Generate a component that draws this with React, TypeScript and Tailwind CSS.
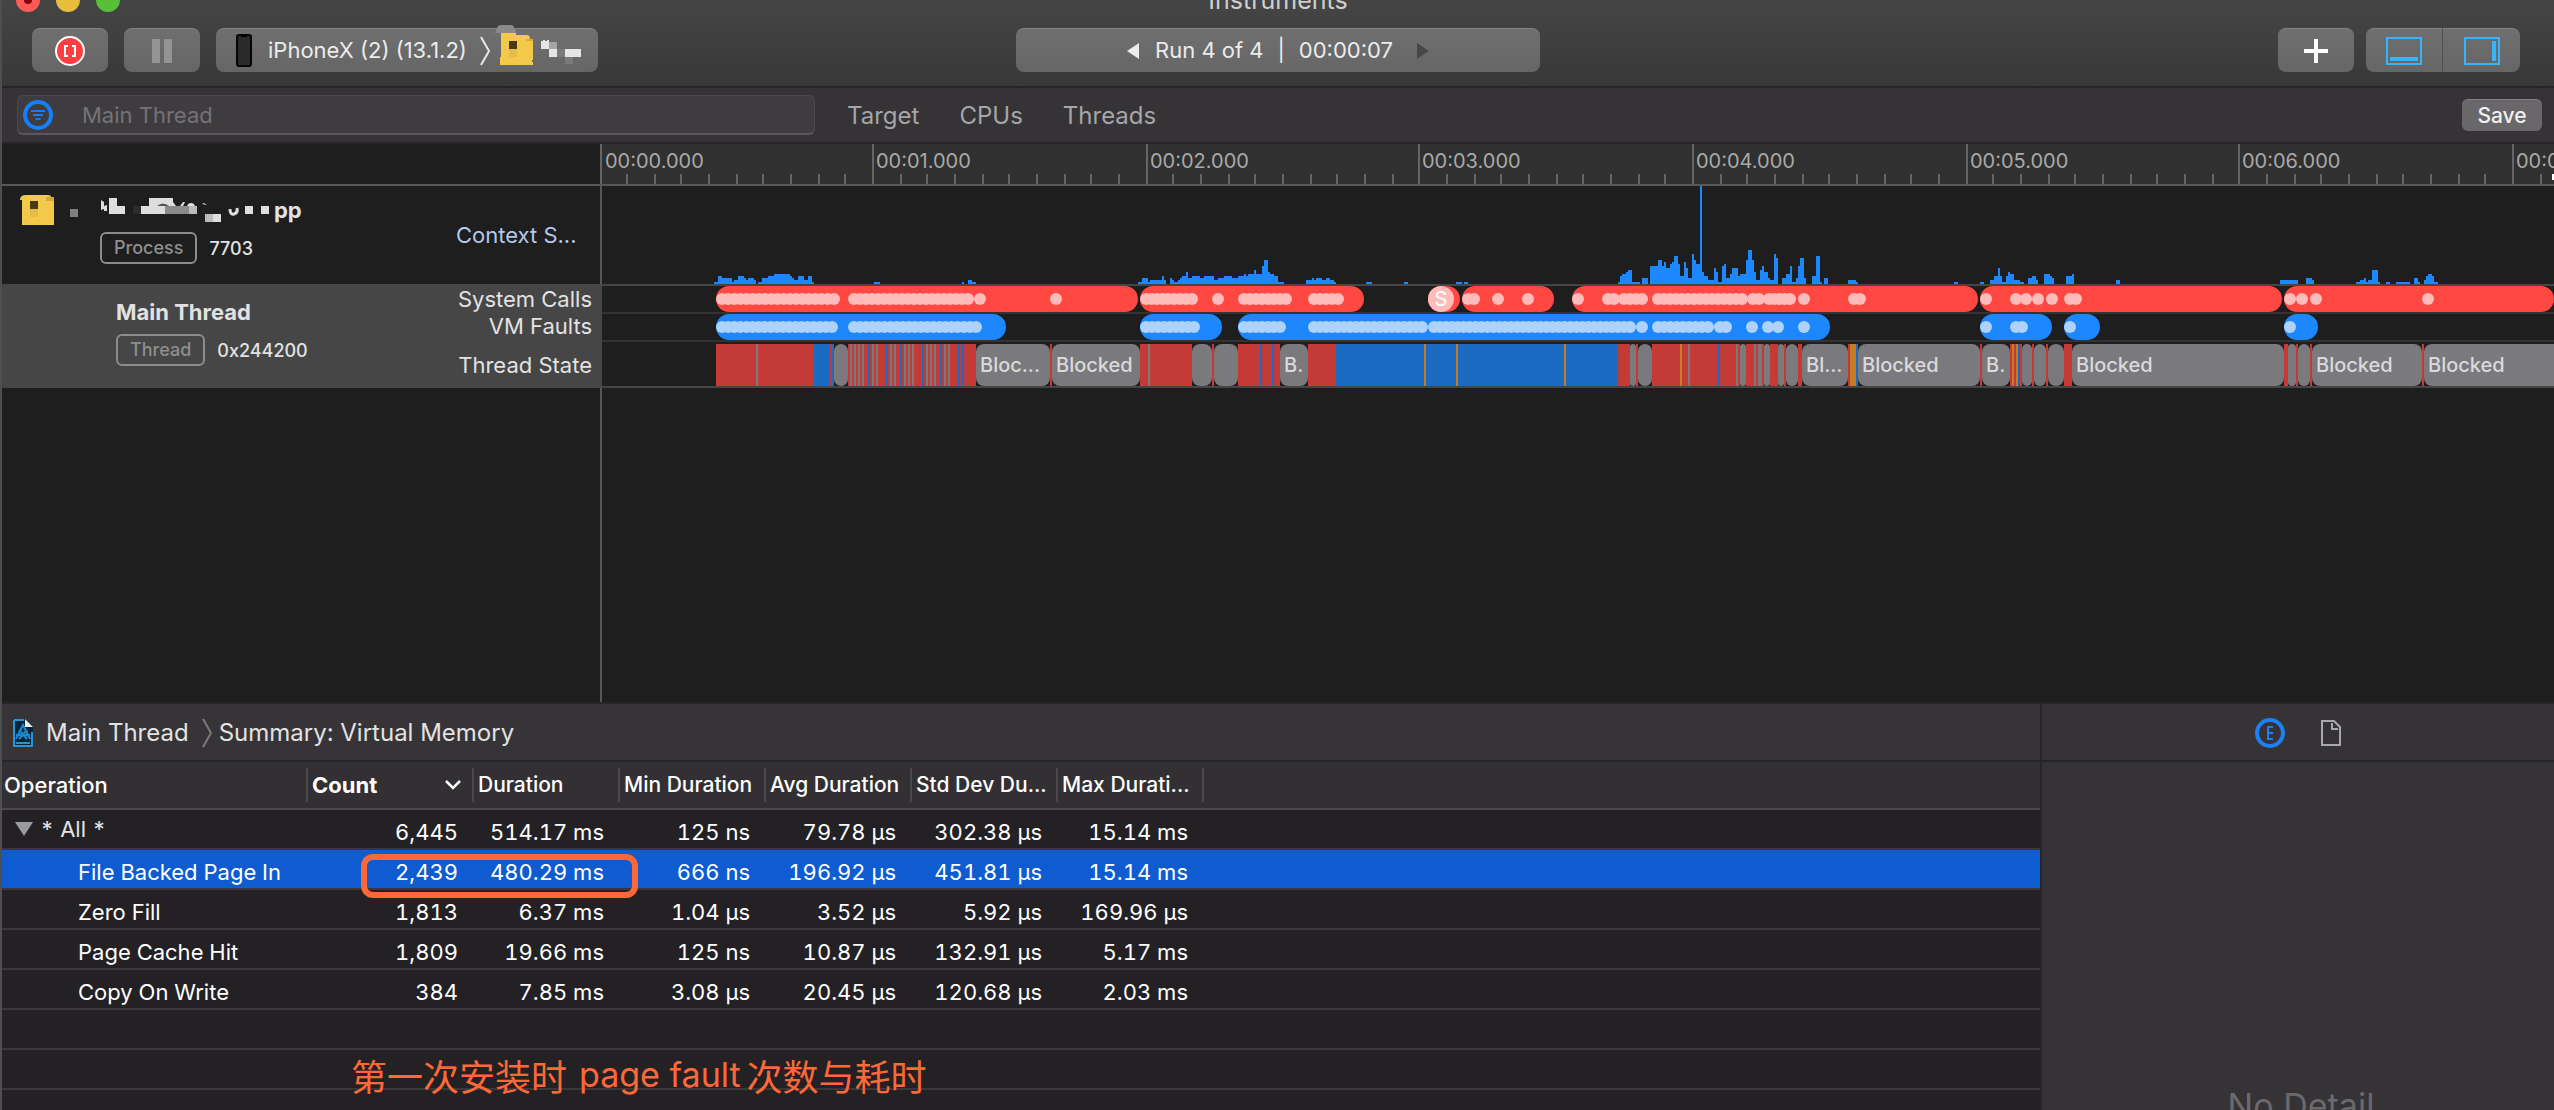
import React from "react";

const ORIGIN = 602;
const SPAN = 1952;

/* Context switches histogram: x, width, height */
const HISTOGRAM = `714,4,2 718,4,8 722,10,6 732,2,2 734,4,4 738,6,8 744,2,6 746,2,4 748,6,6 754,2,4 758,4,2 762,6,6 768,6,8 774,16,10
790,2,8 792,2,6 794,4,4 798,6,8 804,4,4 808,4,8 812,2,2 874,6,2 962,2,2 968,4,4 972,4,2 1138,4,2 1142,6,6 1148,2,2 1150,12,4 1162,2,8 1164,2,4
1170,2,6 1172,2,4 1174,4,2 1178,2,4 1180,2,6 1182,4,8 1186,2,12 1188,4,6 1192,8,8 1200,4,6 1204,10,8 1214,4,4 1218,6,6 1224,8,8 1232,6,6
1238,6,8 1244,2,10 1246,2,8 1248,6,10 1254,2,14 1256,6,10 1262,2,18 1264,4,24 1268,2,12 1270,4,10 1274,4,8 1278,6,2 1306,6,4 1312,2,6
1314,2,4 1316,6,6 1322,4,4 1326,4,6 1330,4,4 1334,2,2 1366,6,2 1404,4,2 1456,6,2 1464,4,2
1618,2,2 1620,2,8 1622,4,10 1626,2,12 1628,4,14 1632,8,2 1642,6,6 1650,8,18 1658,4,24 1662,2,18 1664,2,22 1666,4,16 1670,2,20 1672,2,22
1674,4,28 1678,2,20 1680,4,8 1684,2,22 1686,2,16 1688,4,6 1692,2,30 1694,2,24 1696,4,20 1700,2,98 1702,2,12 1704,4,8 1708,6,4 1714,2,16
1716,2,12 1718,4,2 1722,2,18 1724,2,20 1726,4,6 1730,2,10 1732,6,16 1738,2,8 1740,6,10 1746,2,24 1748,4,34 1752,2,24 1754,2,12 1756,4,4
1760,2,14 1762,2,18 1764,4,12 1768,2,6 1770,4,4 1774,2,30 1776,2,26 1782,4,6 1786,4,10 1790,2,18 1792,4,2 1796,2,6 1798,2,18 1800,4,26
1804,2,6 1812,4,8 1816,4,28 1820,2,2 1824,4,6 1848,8,4 1856,2,2 1954,4,2 1980,4,2 1990,4,4 1994,4,8 1998,2,16 2000,2,8 2002,4,2 2006,2,8
2008,2,12 2010,4,10 2014,6,4 2020,4,2 2028,4,6 2032,4,8 2036,2,4 2044,6,10 2050,2,8 2052,2,6 2066,6,8 2072,2,10 2116,4,4 2280,18,4
2306,6,6 2312,2,4 2356,4,2 2360,4,4 2364,2,6 2366,2,2 2368,4,4 2372,6,14 2378,2,2 2386,4,2 2396,14,2 2414,4,6 2418,2,2 2424,2,4 2426,2,8
2428,4,10 2432,2,8 2434,4,2`
  .split(/\s+/)
  .map((s) => s.split(",").map(Number));

const SYSCALL_PILLS = [[716, 1138], [1140, 1364], [1428, 1460], [1462, 1554], [1572, 1978], [1980, 2282], [2284, 2554]];
const SYSCALL_RUNS = [
  [716, 796], [790, 840], [848, 974], [974, 986], [1050, 1062], [1140, 1174], [1168, 1198], [1212, 1224], [1238, 1292], [1308, 1344],
  [1462, 1480], [1492, 1504], [1522, 1534], [1572, 1584], [1602, 1620], [1618, 1648], [1652, 1748], [1747, 1765], [1763, 1796], [1798, 1810],
  [1848, 1866], [1980, 1992], [2010, 2022], [2020, 2032], [2032, 2044], [2046, 2058], [2064, 2082], [2284, 2296], [2296, 2308],
  [2310, 2322], [2422, 2434],
];
const FAULT_PILLS = [[716, 1006], [1140, 1222], [1238, 1830], [1980, 2052], [2064, 2100], [2284, 2318]];
const FAULT_RUNS = [
  [716, 838], [848, 982], [1140, 1200], [1238, 1286], [1308, 1428], [1428, 1624], [1618, 1636], [1636, 1648], [1652, 1714], [1714, 1732],
  [1746, 1758], [1762, 1774], [1772, 1784], [1798, 1810], [1980, 1992], [2010, 2022], [2016, 2028], [2064, 2076], [2284, 2296],
];

/* Thread states: kind + end position (+ label). n none, r running, b runnable, g tick, o interrupted, k blocked */
const STATES = `n716 r756 g758 r814 b830 r832 b834 k848 r850 g852 r854 g856 r858 g860 r862 g864 r868 b870 r872 g874 r876 g878 r886 b888 r890 g892
r894 g896 r900 b902 r904 g906 r908 g910 r912 g914 r922 b924 r926 g928 r930 g932 r934 g936 r940 b942 r944 g946 r948 g950 r958 b960 r962 b964
r976 k1050:Bloc... r1052 k1140:Blocked r1148 g1150 r1192 k1212 r1214 k1238 r1260 b1262 r1272 b1274 r1280 k1308:B. r1336 b1424 o1426 b1456
o1458 b1564 o1566 b1618 r1630 k1636 r1638 k1652 r1680 o1682 r1688 g1690 r1718 b1720 r1736 g1738 r1740 k1746 r1754 g1756 r1758 g1762 r1764
k1770 r1778 k1784 r1786 k1798 r1802 k1848:Bl... r1850 o1856 b1858 k1980:Blocked r1982 k2010:B. r2012 o2014 r2016 o2018 b2020 r2022 k2032
r2034 k2046 r2048 k2064 r2072 k2284:Blocked r2288 k2296 r2298 k2310 r2312 k2422:Blocked r2424 k2572:Blocked`
  .split(/\s+/)
  .map((s) => {
    const [head, label] = s.split(":");
    return { kind: head[0], end: Number(head.slice(1)), label };
  });

const STATE_CLASS: Record<string, string> = {
  n: "",
  r: "bg-[#c43a37]",
  b: "bg-[#1c6bc2]",
  g: "bg-[#7a797d]",
  o: "bg-[#c67c22]",
  k: "bg-[#7a797d] rounded-lg",
};

const COLUMNS = ["Duration", "Min Duration", "Avg Duration", "Std Dev Du...", "Max Durati..."];
const ROWS = [
  ["File Backed Page In", "2,439", "480.29 ms", "666 ns", "196.92 µs", "451.81 µs", "15.14 ms"],
  ["Zero Fill", "1,813", "6.37 ms", "1.04 µs", "3.52 µs", "5.92 µs", "169.96 µs"],
  ["Page Cache Hit", "1,809", "19.66 ms", "125 ns", "10.87 µs", "132.91 µs", "5.17 ms"],
  ["Copy On Write", "384", "7.85 ms", "3.08 µs", "20.45 µs", "120.68 µs", "2.03 ms"],
];
const TOTAL = ["6,445", "514.17 ms", "125 ns", "79.78 µs", "302.38 µs", "15.14 ms"];

const BUTTON =
  "flex h-11 items-center justify-center rounded-lg border-t border-[#858585] bg-linear-to-b from-[#6f6f6f] to-[#666666]";

function Lane({ pills, runs, fill, dot, marker }: { pills: number[][]; runs: number[][]; fill: string; dot: string; marker?: number }) {
  const dots: number[] = [];
  runs.forEach(([a, b]) => {
    const room = b - a - 12;
    const n = Math.max(0, Math.round(room / 6));
    for (let i = 0; i <= n; i++) dots.push(a + 6 + (n ? (room * i) / n : 0));
  });
  return (
    <svg className="block h-[26px] shrink-0" width={SPAN} height={26} viewBox={`${ORIGIN} 0 ${SPAN} 26`} aria-hidden="true">
      {pills.map(([a, b]) => (
        <rect key={a} x={a} y={0} width={b - a} height={26} rx={13} fill={fill} />
      ))}
      {dots.map((x, i) => (
        <circle key={i} cx={x} cy={13} r={6} fill={dot} />
      ))}
      {marker !== undefined && (
        <g>
          <circle cx={marker} cy={13} r={13} fill={dot} />
          <text x={marker} y={20} textAnchor="middle" fontSize={20} fill="#fff" fontFamily="Inter, sans-serif">
            S
          </text>
        </g>
      )}
    </svg>
  );
}

function Ruler() {
  const ticks = Array.from({ length: 72 }, (_, i) => ({ i, x: 2 * Math.round((598.5 + 27.34 * i) / 2) })).filter((t) => t.i > 0);
  return (
    <svg className="block h-10" width={SPAN} height={40} viewBox={`${ORIGIN} 0 ${SPAN} 40`} fontFamily="Inter, sans-serif">
      {ticks.map(({ i, x }) => (
        <rect key={i} x={x} y={i % 10 ? 30 : 0} width={2} height={i % 10 ? 10 : 40} fill="#666666" />
      ))}
      {[601, 872, 1146, 1418, 1692, 1966, 2238, 2512].map((x, s) => (
        <text key={s} x={x + 4} y={24} fontSize={20} fill="#a9a9a9">
          {`00:0${s}.000`}
        </text>
      ))}
      <rect x={2552} y={30} width={2} height={6} fill="#fff" />
    </svg>
  );
}

function AppTile() {
  return (
    <svg width="58" height="32" viewBox="20 193 58 32" aria-hidden="true">
      <path d="M20 199q0-5 6-5h22q3 0 3 2h3v28H22v-25z" fill="#f3c84b" />
      <path d="M46 196h8v4h-8z" fill="#cfa93e" />
      <path d="M30 200h8v8h-8z" fill="#4a3a12" />
      <path d="M30 208h8v8h-8z" fill="#e5bc47" />
      <path d="M70 208h8v8h-8z" fill="#808080" />
    </svg>
  );
}

function MaskedName() {
  return (
    <svg width="174" height="30" viewBox="101 197 174 30" aria-hidden="true">
      <path d="M102 202l3 2v4l3-1v6h-3v-2l-3 1zM110 200h8v8h8v8h-16zM142 208h8v-8h24v8h-8v8h-24zM246 208h8v8h-8zM262 208h8v8h-8z" fill="#dedede" />
      <path d="M134 208h8v8h-8z" fill="#2c2c2c" />
      <path d="M166 208h24v8h-24z" fill="#8a8a8a" />
      <path d="M190 208h8v8h-8zM206 216h8v8h-8z" fill="#bcbcbc" />
      <path d="M214 216h8v8h-8zM174 204l3 4h4l3-4h2l-2 4h-12zM188 208q1-3 4-3t4 3zM203 206l5 1-3-2z" fill="#dedede" />
      <path d="M231 211q0 6 4 5t3-6" fill="none" stroke="#dedede" strokeWidth="3" />
      <path d="M158 208q6-5 12 0z" fill="#555" />
    </svg>
  );
}

function Tag({ children }: { children: React.ReactNode }) {
  return (
    <span className="flex h-8 items-center rounded-md border-2 border-[#8c8c8c] px-3 text-[18px] leading-6 font-medium text-[#8f8f8f]">{children}</span>
  );
}

function HeaderCell({ children, className = "" }: { children?: React.ReactNode; className?: string }) {
  return (
    <th scope="col" className="h-12 border-b-2 border-[#4a484b] bg-[#323033] p-0 text-left font-medium">
      <div className={`flex h-[34px] items-center overflow-hidden border-r-2 border-[#4a484b] pl-1 whitespace-nowrap ${className}`}>{children}</div>
    </th>
  );
}

function Summary() {
  const cell = "h-10 border-b-2 border-[#39373a] p-0 pt-1.5 pr-4 text-right whitespace-nowrap";
  return (
    <table className="w-full table-fixed border-separate border-spacing-0 text-[22px] leading-6 text-white">
      <colgroup>
        <col className="w-[306px]" />
        <col className="w-[166px]" />
        {COLUMNS.map((c) => (
          <col key={c} className="w-[146px]" />
        ))}
        <col />
      </colgroup>
      <thead>
        <tr>
          <HeaderCell className="pl-[2px]">Operation</HeaderCell>
          <HeaderCell className="justify-between pr-2.5 font-bold">
            Count
            <svg width="18" height="12" viewBox="0 0 18 12" fill="none" stroke="#fff" strokeWidth="2.5" aria-hidden="true">
              <path d="M2 2l7 7 7-7" />
            </svg>
          </HeaderCell>
          {COLUMNS.map((c) => (
            <HeaderCell key={c} className="text-[21px]">{c}</HeaderCell>
          ))}
          <th className="border-b-2 border-[#4a484b] bg-[#323033]" aria-label="Spacer" />
        </tr>
      </thead>
      <tbody className="tabular-nums">
        <tr>
          <td className="h-10 border-b-2 border-[#39373a] p-0 text-[#e4e4e4]">
            <div className="flex items-center gap-1.5 pl-3">
              <svg width="20" height="16" viewBox="0 0 20 16" aria-hidden="true">
                <path d="M1 1h18l-9 14z" fill="#9b9a9c" />
              </svg>
              * All *
            </div>
          </td>
          {TOTAL.map((v, i) => (
            <td key={i} className={cell}>{v}</td>
          ))}
          <td className="border-b-2 border-[#39373a]" />
        </tr>
        {ROWS.map((row, r) => (
          <tr key={row[0]} className={r === 0 ? "bg-[#0f5bd0]" : ""}>
            <td className="h-10 border-b-2 border-[#39373a] p-0 pt-1.5 pl-[76px] whitespace-nowrap">{row[0]}</td>
            {row.slice(1).map((v, i) => (
              <td key={i} className={cell}>{v}</td>
            ))}
            <td className="border-b-2 border-[#39373a]" />
          </tr>
        ))}
        {[0, 1, 2].map((r) => (
          <tr key={r}>
            <td colSpan={8} className="h-10 border-b-2 border-[#39373a] p-0" />
          </tr>
        ))}
      </tbody>
    </table>
  );
}

export default function App() {
  return (
    <div className="flex h-screen flex-col overflow-hidden border-l-2 border-[#4f4f4f] bg-[#1e1e1e] font-['Inter',sans-serif] text-[#e2e2e2]">
      <header className="h-22 shrink-0 border-b-2 border-[#262528] bg-linear-to-b from-[#454545] to-[#383838]">
        <div className="-mt-3 grid h-6 grid-cols-[1fr_auto_1fr] items-center">
          <div className="flex gap-4 pl-3.5">
            <button aria-label="Close" className="flex size-6 items-center justify-center rounded-full bg-[#fc5b57]">
              <span className="size-2 rounded-full bg-[#8b0000]" />
            </button>
            <button aria-label="Minimize" className="size-6 rounded-full bg-[#e5bf3c]" />
            <button aria-label="Zoom" className="size-6 rounded-full bg-[#57c038]" />
          </div>
          <h1 className="text-[25px] leading-6 text-[#cfcfcf]">Instruments</h1>
        </div>
        <div className="grid grid-cols-[1fr_auto_1fr] items-center pt-4">
          <div className="flex gap-4 pl-[30px]">
            <button aria-label="Record" className={`w-19 ${BUTTON}`}>
              <svg width="32" height="32" viewBox="0 0 32 32" fill="none">
                <circle cx="16" cy="16" r="14" fill="#fc3f41" stroke="#fff" strokeWidth="2" />
                <path d="M14 11h-3v10h3M18 11h3v10h-3" stroke="#fff" strokeWidth="2" />
              </svg>
            </button>
            <button aria-label="Pause" className={`w-19 ${BUTTON}`}>
              <svg width="20" height="24" viewBox="0 0 20 24" fill="#949494">
                <path d="M0 0h8v24H0zM12 0h8v24h-8z" />
              </svg>
            </button>
            <button className={`w-[382px] pl-4 text-[22px] whitespace-nowrap text-[#ececec] ${BUTTON} !justify-start`}>
              <svg className="shrink-0" width="24" height="34" viewBox="0 0 24 34" aria-hidden="true">
                <rect x="5" y="1" width="14" height="31" rx="2" fill="#2a2a2a" stroke="#050505" strokeWidth="2" />
                <path d="M9 1h6v2H9z" fill="#000" />
              </svg>
              <span className="pl-3">iPhoneX (2) (13.1.2)</span>
              <svg className="ml-3 shrink-0" width="12" height="30" viewBox="0 0 12 30" fill="none" stroke="#e8e8e8" strokeWidth="2" aria-hidden="true">
                <path d="M2 1l8 14-8 14" />
              </svg>
              <svg className="-mt-1 ml-1 shrink-0 self-start" width="88" height="42" viewBox="496 24 88 42" aria-hidden="true">
                <path d="M496 32l3-7q1-1 3-1h10q2 0 3 2l2 6z" fill="#8a8a8a" />
                <path d="M502 32h15v2h11q3 0 3 4h3v21h-1v2h1v3h-33v-8h1z" fill="#f3c84b" />
                <path d="M527 38h7v2h-7z" fill="#d6ae40" />
                <path d="M510 40h8v8h-8z" fill="#4a3a12" />
                <path d="M510 48h8v8h-8z" fill="#e5bc47" />
                <path d="M542 40h2v-1h2v1h2v-1h2v9h-8zM550 48h8v8h-8zM566 48h16v8h-16z" fill="#e6e6e6" />
                <path d="M550 41h8v7h-8z" fill="#a5a5a5" />
                <path d="M558 48h8v8h-8zM566 56h8v7h-8z" fill="#7a7a7a" />
              </svg>
            </button>
          </div>
          <div className={`w-[524px] gap-4 text-[22px] text-[#ececec] ${BUTTON}`}>
            <button aria-label="Previous run">
              <svg width="12" height="16" viewBox="0 0 12 16" fill="#ececec"><path d="M12 0v16L0 8z" /></svg>
            </button>
            <span className="flex gap-3.5">
              <span>Run 4 of 4</span>
              <span>|</span>
              <span>00:00:07</span>
            </span>
            <button aria-label="Next run" className="ml-2">
              <svg width="12" height="16" viewBox="0 0 12 16" fill="#474747"><path d="M0 0v16l12-8z" /></svg>
            </button>
          </div>
          <div className="flex justify-end gap-3 pr-[34px]">
            <button aria-label="Add" className={`w-19 ${BUTTON}`}>
              <svg width="24" height="24" viewBox="0 0 24 24" stroke="#fff" strokeWidth="4"><path d="M12 0v24M0 12h24" /></svg>
            </button>
            <div className="flex">
              <button aria-label="Toggle detail area" className={`w-[77px] border-r border-r-[#505050] ${BUTTON} !rounded-r-none`}>
                <svg width="36" height="28" viewBox="0 0 36 28" fill="none" stroke="#38b5fa" strokeWidth="2">
                  <path d="M1 1h34v26H1z" />
                  <path d="M4 22h28" strokeWidth="4" />
                </svg>
              </button>
              <button aria-label="Toggle inspector" className={`w-[77px] ${BUTTON} !rounded-l-none`}>
                <svg width="36" height="28" viewBox="0 0 36 28" fill="none" stroke="#38b5fa" strokeWidth="2">
                  <path d="M1 1h34v26H1z" />
                  <path d="M30 4v20" strokeWidth="4" />
                </svg>
              </button>
            </div>
          </div>
        </div>
      </header>

      <div className="flex h-14 shrink-0 items-center border-b-2 border-[#272528] bg-[#353336] text-[24px] text-[#a6a5a7]">
        <label className="ml-[15px] flex h-10 w-[798px] items-center rounded-md border border-b-2 border-[#4b494c] border-b-[#5a585b] bg-[#3f3c40] pl-1">
          <svg width="32" height="32" viewBox="0 0 32 32" fill="none" stroke="#167efb" strokeWidth="4" aria-hidden="true">
            <circle cx="16" cy="16" r="13" />
            <path d="M9 12h14M11 16h10M13.500 20h5" strokeWidth="2" />
          </svg>
          <input
            aria-label="Filter"
            placeholder="Main Thread"
            className="ml-7 min-w-0 flex-1 bg-transparent pt-0.5 text-[22px] text-white outline-none placeholder:text-[#757376]"
          />
        </label>
        <nav className="ml-8 flex gap-10 pt-0.5">
          <button>Target</button>
          <button>CPUs</button>
          <button>Threads</button>
        </nav>
        <button className="mr-3 ml-auto h-8 w-20 rounded-md border-t border-[#838184] bg-[#69676a] text-[21px] font-medium text-[#f0f0f0]">Save</button>
      </div>

      <section className="flex min-h-0 flex-1 flex-col">
        <div className="flex h-[42px] shrink-0 border-b-2 border-[#585858]">
          <div className="w-150 shrink-0 border-r-2 border-[#666666]" />
          <div className="min-w-0 flex-1 overflow-hidden bg-[#303030]">
            <Ruler />
          </div>
        </div>

        <div className="flex h-25 shrink-0 border-b-2 border-[#464646]">
          <div className="flex w-150 shrink-0 border-r-2 border-[#555555]">
            <div className="flex w-[454px] gap-[22px] pt-2 pl-4.5">
              <AppTile />
              <div>
                <div className="flex h-8 items-center">
                  <MaskedName />
                  <span className="text-[22px] font-bold">pp</span>
                </div>
                <div className="mt-1.5 flex items-center gap-3 text-[18px]">
                  <Tag>Process</Tag>
                  <span className="font-medium">7703</span>
                </div>
              </div>
            </div>
            <span className="self-center text-[22px] text-[#b5c8ea]">Context S...</span>
          </div>
          <div className="min-w-0 flex-1 overflow-hidden">
            <svg className="block" width={SPAN} height={98} viewBox={`${ORIGIN} 0 ${SPAN} 98`} fill="#1d87ff" shapeRendering="crispEdges" role="img" aria-label="Context switches">
              {HISTOGRAM.map(([x, w, h]) => (
                <rect key={x} x={x} y={98 - h} width={w} height={h} />
              ))}
            </svg>
          </div>
        </div>

        <div className="flex h-[102px] shrink-0 border-b-2 border-[#464646]">
          <div className="flex w-150 shrink-0 justify-between bg-[#464646] pr-2.5">
            <div className="pt-2.5 pl-[114px]">
              <h2 className="text-[22px] leading-8 font-bold">Main Thread</h2>
              <div className="mt-1.5 flex items-center gap-3 text-[18px]">
                <Tag>Thread</Tag>
                <span className="font-medium">0x244200</span>
              </div>
            </div>
            <div className="text-right text-[22px] leading-[27px]">
              <div>System Calls</div>
              <div>VM Faults</div>
              <div className="pt-3">Thread State</div>
            </div>
          </div>
          <div className="min-w-0 flex-1 overflow-hidden">
            <div className="border-b-2 border-[#333333]">
              <Lane pills={SYSCALL_PILLS} runs={SYSCALL_RUNS} fill="#fe4841" dot="#ffbcba" marker={1441} />
            </div>
            <div className="border-b-2 border-[#333333]">
              <Lane pills={FAULT_PILLS} runs={FAULT_RUNS} fill="#1d87ff" dot="#afd2fd" />
            </div>
            <div className="mt-0.5 flex h-[42px]">
              {STATES.map((s, i) => (
                <div
                  key={i}
                  className={`flex shrink-0 items-center overflow-hidden text-[20px] font-medium whitespace-nowrap text-[#dadada] ${STATE_CLASS[s.kind]}`}
                  style={{ width: s.end - (i ? STATES[i - 1].end : ORIGIN) }}
                >
                  {s.label && <span className="pl-1">{s.label}</span>}
                </div>
              ))}
            </div>
          </div>
        </div>

        <div className="w-150 flex-1 border-r-2 border-[#555555]" />
      </section>

      <section className="flex h-[408px] shrink-0 border-t-2 border-[#262528]">
        <div className="relative min-w-0 flex-1 overflow-hidden border-r-2 border-[#262528] bg-[#232124]">
          <nav className="flex h-[58px] items-center border-b-2 border-[#262528] bg-[#363437] pt-0.5 pl-2.5 text-[24px]">
            <svg width="22" height="30" viewBox="0 0 22 30" aria-hidden="true">
              <path d="M1 1h13l7 7v21H1z" fill="#0c2534" />
              <path d="M2 2h10M2 2v26h18V14M4 25h14" fill="none" stroke="#2196dd" strokeWidth="2" />
              <path d="M4 21l7-14 7 14M4 17h14M7 12l8 9M15 12l-8 9" fill="none" stroke="#1b8bd6" strokeWidth="2" />
              <path d="M13 1v8h8z" fill="#e8f2f8" />
            </svg>
            <a href="#thread" className="ml-3">Main Thread</a>
            <svg className="mr-1.5 ml-3" width="12" height="30" viewBox="0 0 12 30" fill="none" stroke="#7c7a7d" strokeWidth="2" aria-hidden="true">
              <path d="M2 1l8 14-8 14" />
            </svg>
            <a href="#summary">Summary: Virtual Memory</a>
          </nav>
          <Summary />
          <div className="absolute top-[150px] left-[359px] h-11 w-[277px] rounded-xl border-[6px] border-[#fd6839]" />
          <p className="absolute top-[346px] left-[349px] flex items-center text-[36px] leading-[50px] whitespace-nowrap text-[#fd6839] font-['Noto_Sans_CJK_SC',sans-serif]">
            第一次安装时
            <span className="mr-1.5 ml-3 font-['Inter',sans-serif] text-[34px]">page fault</span>
            次数与耗时
          </p>
        </div>
        <aside className="flex w-[512px] shrink-0 flex-col bg-[#353336]">
          <div className="flex h-[58px] shrink-0 items-center justify-center gap-9 border-b-2 border-[#262528] pt-0.5">
            <button aria-label="Extended detail">
              <svg width="30" height="30" viewBox="0 0 30 30" fill="none" stroke="#1f7ff5" strokeWidth="4">
                <circle cx="15" cy="15" r="13" />
                <path d="M18 9h-5v12h5M13 15h5" strokeWidth="2" />
              </svg>
            </button>
            <button aria-label="File">
              <svg width="20" height="26" viewBox="0 0 20 26" fill="none" stroke="#a9a8aa" strokeWidth="2">
                <path d="M1 1h12l6 6v18H1z" />
                <path d="M11 3v6h6" />
              </svg>
            </button>
          </div>
          <p className="shrink-0 pt-80 pl-1.5 text-center text-[34px] leading-12 text-[#6b696c]">No Detail</p>
        </aside>
      </section>
    </div>
  );
}
